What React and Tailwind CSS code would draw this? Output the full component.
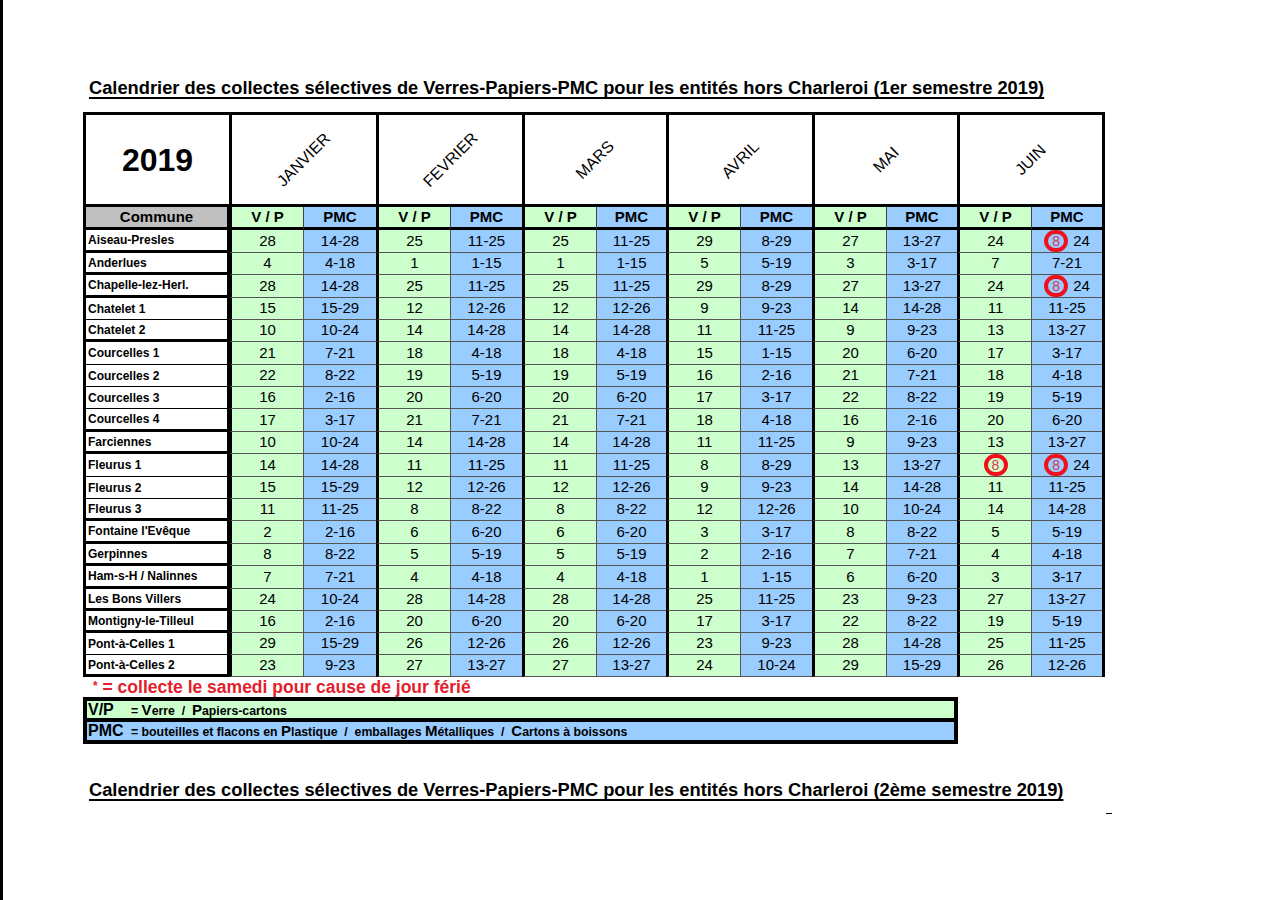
import React from "react";

const MONTHS = ["JANVIER", "FEVRIER", "MARS", "AVRIL", "MAI", "JUIN"];

const ROWS = [
  ["Aiseau-Presles", true, ["28", "14-28", "25", "11-25", "25", "11-25", "29", "8-29", "27", "13-27", "24", "R24"]],
  ["Anderlues", true, ["4", "4-18", "1", "1-15", "1", "1-15", "5", "5-19", "3", "3-17", "7", "7-21"]],
  ["Chapelle-lez-Herl.", true, ["28", "14-28", "25", "11-25", "25", "11-25", "29", "8-29", "27", "13-27", "24", "R24"]],
  ["Chatelet 1", false, ["15", "15-29", "12", "12-26", "12", "12-26", "9", "9-23", "14", "14-28", "11", "11-25"]],
  ["Chatelet 2", true, ["10", "10-24", "14", "14-28", "14", "14-28", "11", "11-25", "9", "9-23", "13", "13-27"]],
  ["Courcelles 1", false, ["21", "7-21", "18", "4-18", "18", "4-18", "15", "1-15", "20", "6-20", "17", "3-17"]],
  ["Courcelles 2", false, ["22", "8-22", "19", "5-19", "19", "5-19", "16", "2-16", "21", "7-21", "18", "4-18"]],
  ["Courcelles 3", false, ["16", "2-16", "20", "6-20", "20", "6-20", "17", "3-17", "22", "8-22", "19", "5-19"]],
  ["Courcelles 4", true, ["17", "3-17", "21", "7-21", "21", "7-21", "18", "4-18", "16", "2-16", "20", "6-20"]],
  ["Farciennes", true, ["10", "10-24", "14", "14-28", "14", "14-28", "11", "11-25", "9", "9-23", "13", "13-27"]],
  ["Fleurus 1", false, ["14", "14-28", "11", "11-25", "11", "11-25", "8", "8-29", "13", "13-27", "R", "R24"]],
  ["Fleurus 2", false, ["15", "15-29", "12", "12-26", "12", "12-26", "9", "9-23", "14", "14-28", "11", "11-25"]],
  ["Fleurus 3", true, ["11", "11-25", "8", "8-22", "8", "8-22", "12", "12-26", "10", "10-24", "14", "14-28"]],
  ["Fontaine l'Evêque", true, ["2", "2-16", "6", "6-20", "6", "6-20", "3", "3-17", "8", "8-22", "5", "5-19"]],
  ["Gerpinnes", true, ["8", "8-22", "5", "5-19", "5", "5-19", "2", "2-16", "7", "7-21", "4", "4-18"]],
  ["Ham-s-H / Nalinnes", true, ["7", "7-21", "4", "4-18", "4", "4-18", "1", "1-15", "6", "6-20", "3", "3-17"]],
  ["Les Bons Villers", true, ["24", "10-24", "28", "14-28", "28", "14-28", "25", "11-25", "23", "9-23", "27", "13-27"]],
  ["Montigny-le-Tilleul", true, ["16", "2-16", "20", "6-20", "20", "6-20", "17", "3-17", "22", "8-22", "19", "5-19"]],
  ["Pont-à-Celles 1", false, ["29", "15-29", "26", "12-26", "26", "12-26", "23", "9-23", "28", "14-28", "25", "11-25"]],
  ["Pont-à-Celles 2", true, ["23", "9-23", "27", "13-27", "27", "13-27", "24", "10-24", "29", "15-29", "26", "12-26"]],
];

const HEIGHTS = [
  "h-[23px]", "h-[22px]", "h-[23px]", "h-[22px]", "h-[22px]",
  "h-[23px]", "h-[22px]", "h-[22px]", "h-[23px]", "h-[22px]",
  "h-[23px]", "h-[22px]", "h-[22px]", "h-[23px]", "h-[22px]",
  "h-[23px]", "h-[22px]", "h-[22px]", "h-[22px]", "h-[22px]",
];

function Ring() {
  return (
    <span className="inline-flex items-center justify-center w-[24px] h-[22px] rounded-full border-[4px] border-[#f0101a] text-[#d83a55] text-[14px] leading-none">
      8
    </span>
  );
}

function CellValue({ v }) {
  if (v === "R") return <Ring />;
  if (v === "R24")
    return (
      <span className="flex items-center gap-[5px]">
        <Ring />
        <span>24</span>
      </span>
    );
  return <span>{v}</span>;
}

export default function App() {
  return (
    <div className="min-h-[900px] w-full bg-white border-l-[3px] border-black text-black font-['Liberation_Sans',Arial,sans-serif]">
      <div className="pl-[80px] pt-[78px]">
        <div className="pl-[6px] h-[20px] leading-[20px] text-[18.3px] font-bold underline decoration-[1.5px] underline-offset-[3px] [text-decoration-skip-ink:none] whitespace-nowrap">
          Calendrier des collectes sélectives de Verres-Papiers-PMC pour les entités hors Charleroi (1er semestre 2019)
        </div>

        <div className="mt-[14px] w-fit border-l-[3px] border-t-[3px] border-r-[3px] border-black">
          <div className="grid grid-cols-[143px_74px_73px_74px_72px_74px_70px_74px_72px_74px_71px_74px_71px]">
            {/* header row */}
            <div className="h-[92px] border-b-[3px] border-black flex items-center justify-center text-[32px] font-bold">
              2019
            </div>
            {MONTHS.map((m) => (
              <div
                key={m}
                className="col-span-2 h-[92px] border-l-[3px] border-b-[3px] border-black flex items-center justify-center"
              >
                <span className="inline-block -rotate-45 text-[16px]">{m}</span>
              </div>
            ))}

            {/* sub header */}
            <div className="h-[23px] border-b-[3px] border-r-[2px] border-black bg-[#c0c0c0] flex items-center justify-center text-[15px] font-bold">
              Commune
            </div>
            {MONTHS.map((m) => (
              <React.Fragment key={m + "s"}>
                <div className="h-[23px] bg-[#ccffcc] border-l-[3px] border-b-[3px] border-black flex items-center justify-center text-[15px] font-bold">
                  V / P
                </div>
                <div className="h-[23px] bg-[#99ccff] border-l border-l-[#444] border-b-[3px] border-b-black flex items-center justify-center text-[15px] font-bold">
                  PMC
                </div>
              </React.Fragment>
            ))}

            {/* data rows */}
            {ROWS.map(([name, thick, vals], i) => (
              <React.Fragment key={name}>
                <div
                  className={
                    HEIGHTS[i] +
                    " bg-white border-r-[2px] border-black flex items-center pl-[2px] text-[12px] font-bold whitespace-nowrap " +
                    (thick ? "border-b-[3px]" : "border-b")
                  }
                >
                  {name}
                </div>
                {vals.map((v, j) => (
                  <div
                    key={j}
                    className={
                      HEIGHTS[i] +
                      " flex items-center justify-center text-[15px] border-b border-b-[#555] " +
                      (j % 2 === 0
                        ? "bg-[#ccffcc] border-l-[3px] border-l-black"
                        : "bg-[#99ccff] border-l border-l-[#555]")
                    }
                  >
                    <CellValue v={v} />
                  </div>
                ))}
              </React.Fragment>
            ))}
          </div>
        </div>

        <div className="h-[20px] leading-[20px] pl-[10px] text-[17.5px] font-bold text-[#e3202c] whitespace-nowrap">
          <span className="text-[12px] align-top relative top-[-1px]">*</span> = collecte le samedi pour cause de jour férié
        </div>

        <div className="w-[875px] border-[4px] border-black">
          <div className="h-[21px] bg-[#ccffcc] border-b-[4px] border-black flex items-center whitespace-nowrap">
            <span className="w-[44px] pl-[1px] text-[16px] font-bold leading-none">V/P</span>
            <span className="text-[12.3px] font-bold leading-none">
              = <span className="text-[15px]">V</span>erre &nbsp;/&nbsp; <span className="text-[15px]">P</span>apiers-cartons
            </span>
          </div>
          <div className="h-[18px] bg-[#99ccff] flex items-center whitespace-nowrap">
            <span className="w-[44px] pl-[1px] text-[16px] font-bold leading-none">PMC</span>
            <span className="text-[12.3px] font-bold leading-none">
              = bouteilles et flacons en <span className="text-[15px]">P</span>lastique &nbsp;/&nbsp; emballages{" "}
              <span className="text-[15px]">M</span>étalliques &nbsp;/&nbsp; <span className="text-[15px]">C</span>artons à boissons
            </span>
          </div>
        </div>

        <div className="mt-[36px] pl-[6px] h-[20px] leading-[20px] text-[18.3px] font-bold underline decoration-[1.5px] underline-offset-[3px] [text-decoration-skip-ink:none] whitespace-nowrap">
          Calendrier des collectes sélectives de Verres-Papiers-PMC pour les entités hors Charleroi (2ème semestre 2019)
        </div>

        <div className="ml-[1023px] mt-[13px] w-[6px] h-[1px] bg-black"></div>
      </div>
    </div>
  );
}
